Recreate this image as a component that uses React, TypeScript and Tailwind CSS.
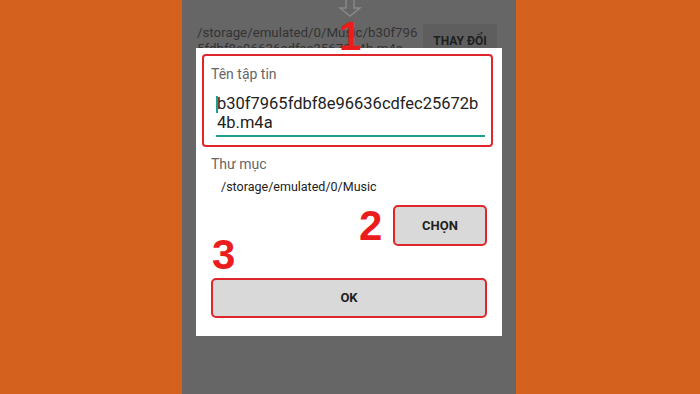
import React from "react";

const roboto = { fontFamily: "Roboto, 'Noto Sans', sans-serif" };

export default function App() {
  return (
    <div className="w-[700px] h-[394px] bg-[#d5611f] flex overflow-hidden" style={roboto}>
      <div className="ml-[182px] w-[334px] h-full bg-[#666666] relative">
        {/* background screen content */}
        <div className="flex justify-center h-[16px]">
          <svg width="30" height="17" viewBox="0 0 30 17" className="ml-[2px]">
            <path d="M11 0 V8 H5 L15 16 L25 8 H19 V0" fill="none" stroke="#8a8a8a" strokeWidth="1.4" />
          </svg>
        </div>
        <div className="flex items-start pl-[15px] pr-[19px] pt-[9px]">
          <div className="w-[224px] text-[13.3px] leading-[16px] text-[#333333] break-all">
            /storage/emulated/0/Music/b30f7965fdbf8e96636cdfec25672b4b.m4a
          </div>
          <div className="ml-auto -mt-[1px] w-[74px] h-[34px] bg-[#5e5e5e] flex items-center justify-center text-[12px] font-bold text-[#1e1e1e]">
            THAY ĐỔI
          </div>
        </div>

        {/* dialog */}
        <div className="absolute left-[14px] top-[48px] w-[306px] h-[288px] bg-white flex flex-col pt-[6px] pl-[6px]">
          <div className="w-[291px] h-[93px] border-2 border-[#e0252b] rounded-[4px] flex flex-col pl-[7px] pt-[10px]">
            <div className="text-[14px] leading-[16px] text-[#666666]">Tên tập tin</div>
            <div className="relative ml-[5px] mt-[12px] w-[269px] border-b-2 border-[#1f9e8f] pb-[3px] pl-[1px]">
              <span className="absolute left-0 top-[2px] w-[2px] h-[17px] bg-[#1f9e8f]" />
              <div className="text-[16.5px] leading-[19px] text-[#222222] break-all">
                b30f7965fdbf8e96636cdfec25672b4b.m4a
              </div>
            </div>
          </div>
          <div className="pl-[9px] mt-[9px] text-[14px] leading-[16px] text-[#666666]">Thư mục</div>
          <div className="pl-[19px] mt-[8px] text-[12.5px] leading-[14px] text-[#222222]">/storage/emulated/0/Music</div>
          <div className="flex justify-end pr-[15px] mt-[11px]">
            <div className="w-[94px] h-[41px] border-2 border-[#e0252b] rounded-[5px] bg-[#d9d9d9] flex items-center justify-center text-[13px] font-bold text-[#1e1e1e]">
              CHỌN
            </div>
          </div>
          <div className="ml-[9px] mt-[32px] w-[276px] h-[40px] border-2 border-[#e0252b] rounded-[5px] bg-[#d9d9d9] flex items-center justify-center text-[13px] font-bold text-[#1e1e1e]">
            OK
          </div>
        </div>

        {/* annotations */}
        <div className="absolute left-[157px] top-[14px] text-[40px] leading-[44px] font-bold text-[#ea1c1c]" style={{ fontFamily: "'Liberation Sans', Arial, sans-serif" }}>1</div>
        <div className="absolute left-[177px] top-[203px] text-[42px] leading-[46px] font-bold text-[#ea1c1c]" style={{ fontFamily: "'Liberation Sans', Arial, sans-serif" }}>2</div>
        <div className="absolute left-[30px] top-[232px] text-[42px] leading-[46px] font-bold text-[#ea1c1c]" style={{ fontFamily: "'Liberation Sans', Arial, sans-serif" }}>3</div>
      </div>
    </div>
  );
}
